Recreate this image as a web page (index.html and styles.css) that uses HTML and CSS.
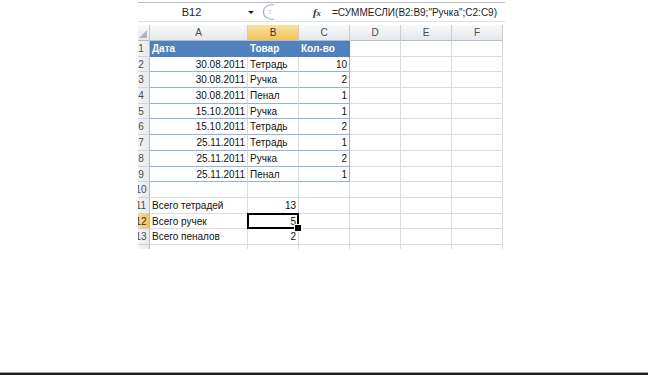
FILE: index.html
```html
<!DOCTYPE html>
<html lang="ru">
<head>
    <meta charset="UTF-8">
    <meta name="viewport" content="width=device-width, initial-scale=1.0">
    <title>СУММЕСЛИ</title>
    <link rel="stylesheet" href="styles.css">
</head>
<body>
    <div class="sheet">
        <div class="formula-bar">
            <div class="name-box">B12</div>
            <div class="name-arrow"></div>
            <svg class="bump" width="18" height="18" viewBox="0 0 18 18">
                <path d="M14 1.5 Q3.5 1.5 3.5 9 Q3.5 16.5 14 16.5" fill="none" stroke="#a9b4c2" stroke-width="1.2"/>
                <path d="M8 7.5 H11 M8 10 H11" stroke="#d0d6de" stroke-width="1"/>
            </svg>
            <div class="fx"><i>f</i><span>x</span></div>
            <div class="formula">=СУММЕСЛИ(B2:B9;"Ручка";C2:C9)</div>
        </div>

        <div class="grid">
            <div class="c ch corner"></div>
            <div class="c ch">A</div>
            <div class="c ch sel">B</div>
            <div class="c ch">C</div>
            <div class="c ch">D</div>
            <div class="c ch">E</div>
            <div class="c ch">F</div>

            <div class="c rh"><span>1</span></div>
            <div class="c th">Дата</div>
            <div class="c th">Товар</div>
            <div class="c th t-end">Кол-во</div>
            <div class="c"></div><div class="c"></div><div class="c"></div>

            <div class="c rh"><span>2</span></div>
            <div class="c td num">30.08.2011</div>
            <div class="c td">Тетрадь</div>
            <div class="c td num t-end">10</div>
            <div class="c"></div><div class="c"></div><div class="c"></div>

            <div class="c rh"><span>3</span></div>
            <div class="c td num">30.08.2011</div>
            <div class="c td">Ручка</div>
            <div class="c td num t-end">2</div>
            <div class="c"></div><div class="c"></div><div class="c"></div>

            <div class="c rh"><span>4</span></div>
            <div class="c td num">30.08.2011</div>
            <div class="c td">Пенал</div>
            <div class="c td num t-end">1</div>
            <div class="c"></div><div class="c"></div><div class="c"></div>

            <div class="c rh"><span>5</span></div>
            <div class="c td num">15.10.2011</div>
            <div class="c td">Ручка</div>
            <div class="c td num t-end">1</div>
            <div class="c"></div><div class="c"></div><div class="c"></div>

            <div class="c rh"><span>6</span></div>
            <div class="c td num">15.10.2011</div>
            <div class="c td">Тетрадь</div>
            <div class="c td num t-end">2</div>
            <div class="c"></div><div class="c"></div><div class="c"></div>

            <div class="c rh"><span>7</span></div>
            <div class="c td num">25.11.2011</div>
            <div class="c td">Тетрадь</div>
            <div class="c td num t-end">1</div>
            <div class="c"></div><div class="c"></div><div class="c"></div>

            <div class="c rh"><span>8</span></div>
            <div class="c td num">25.11.2011</div>
            <div class="c td">Ручка</div>
            <div class="c td num t-end">2</div>
            <div class="c"></div><div class="c"></div><div class="c"></div>

            <div class="c rh"><span>9</span></div>
            <div class="c td num">25.11.2011</div>
            <div class="c td">Пенал</div>
            <div class="c td num t-end">1</div>
            <div class="c"></div><div class="c"></div><div class="c"></div>

            <div class="c rh"><span>10</span></div>
            <div class="c"></div><div class="c"></div><div class="c"></div>
            <div class="c"></div><div class="c"></div><div class="c"></div>

            <div class="c rh"><span>11</span></div>
            <div class="c">Всего тетрадей</div>
            <div class="c num">13</div>
            <div class="c"></div><div class="c"></div><div class="c"></div><div class="c"></div>

            <div class="c rh sel"><span>12</span></div>
            <div class="c">Всего ручек</div>
            <div class="c num active">5</div>
            <div class="c"></div><div class="c"></div><div class="c"></div><div class="c"></div>

            <div class="c rh"><span>13</span></div>
            <div class="c">Всего пеналов</div>
            <div class="c num">2</div>
            <div class="c"></div><div class="c"></div><div class="c"></div><div class="c"></div>

            <div class="c rh stub"></div>
            <div class="c stub"></div><div class="c stub"></div><div class="c stub"></div>
            <div class="c stub"></div><div class="c stub"></div><div class="c stub"></div>
        </div>
    </div>

    <div class="page-rule"></div>
</body>
</html>
```

FILE: styles.css
```css
* {
    margin: 0;
    padding: 0;
    box-sizing: border-box;
}

body {
    font-family: 'Liberation Sans', Arial, sans-serif;
    background: #fff;
    height: 375px;
    display: flex;
    flex-direction: column;
    overflow: hidden;
}

.sheet {
    width: 367px;
    margin: 2px 0 0 138px;
}

/* formula bar */

.formula-bar {
    display: flex;
    align-items: center;
    height: 20px;
    border-top: 1px solid #b9bec6;
    border-bottom: 1px solid #dfe3e8;
    color: #1e1e1e;
}

.name-box {
    width: 107px;
    text-align: center;
    font-size: 11px;
}

.name-arrow {
    width: 0;
    height: 0;
    margin: 0 4px 0 3px;
    border-left: 3px solid transparent;
    border-right: 3px solid transparent;
    border-top: 3px solid #222;
}

.bump {
    margin-left: 2px;
}

.fx {
    margin-left: 35px;
    width: 16px;
    font-family: 'Liberation Serif', serif;
    font-weight: bold;
    font-size: 11px;
    color: #333;
}

.fx span {
    font-size: 8px;
    font-style: italic;
}

.formula {
    flex: 1;
    padding-left: 3px;
    font-size: 10px;
    white-space: nowrap;
}

/* grid */

.grid {
    display: grid;
    grid-template-columns: 12px 98px repeat(5, 51px);
    grid-template-rows: 16px repeat(13, 15.7px) 4px;
    margin-top: 3px;
    font-size: 10px;
    color: #111;
}

.c {
    border-right: 1px solid #dadcdd;
    border-bottom: 1px solid #dadcdd;
    padding: 0 2px;
    line-height: 15px;
    white-space: nowrap;
    overflow: hidden;
}

.num {
    text-align: right;
}

.ch {
    background: linear-gradient(#f8f9fa, #e5e8ec);
    border-right-color: #c9cdd2;
    border-bottom-color: #b8bdc4;
    color: #4a4a4a;
    text-align: center;
    line-height: 15px;
}

.corner {
    position: relative;
}

.corner::after {
    content: "";
    position: absolute;
    right: 2px;
    bottom: 2px;
    border-left: 8px solid transparent;
    border-bottom: 8px solid #b3b6ba;
}

.rh {
    background: linear-gradient(90deg, #f3f4f6, #e7eaee);
    border-right-color: #b8bdc4;
    border-bottom-color: #cfd3d8;
    color: #4a4a4a;
    padding: 0;
}

.rh span {
    display: block;
    width: 18px;
    margin-left: -6px;
    text-align: center;
}

.sel {
    background: linear-gradient(#f9e0a2, #f2c358);
    color: #333;
}

.rh.sel {
    background: linear-gradient(90deg, #f9dd96, #f2c358);
}

.stub {
    border-bottom: none;
}

/* table style */

.th {
    background: #4f81bd;
    color: #fff;
    font-weight: bold;
    border-right-color: #4f81bd;
    border-bottom-color: #4f81bd;
}

.td {
    border-bottom-color: #95b3d7;
}

.t-end {
    border-right-color: #95b3d7;
}

.th.t-end {
    border-right-color: #4f81bd;
}

/* active cell */

.active {
    position: relative;
    overflow: visible;
}

.active::before {
    content: "";
    position: absolute;
    left: -1px;
    top: -1px;
    right: -1px;
    bottom: -1px;
    border: 2px solid #000;
}

.active::after {
    content: "";
    position: absolute;
    right: -4px;
    bottom: -4px;
    width: 6px;
    height: 6px;
    background: #000;
    border: 1px solid #fff;
}

.page-rule {
    margin-top: auto;
    margin-right: 4px;
    height: 3px;
    border-top: 1px solid #999;
    background: #1e1e1e;
}
```
